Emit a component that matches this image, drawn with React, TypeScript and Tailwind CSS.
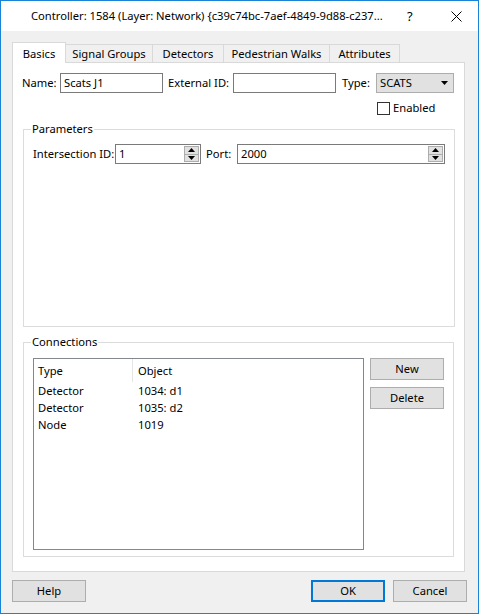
import React from "react";

const font = { fontFamily: '"Noto Sans", "Open Sans", sans-serif' };

function Btn({ label, cls }: { label: string; cls: string }) {
  return (
    <div className={"flex h-[22px] w-[74px] items-center justify-center bg-[#e1e1e1] text-black " + cls}>
      {label}
    </div>
  );
}

function SpinBox() {
  return (
    <div className="mr-[1px] flex h-[16px] w-[15px] flex-col border border-[#adadad] bg-[#e1e1e1]">
      <div className="flex flex-1 items-center justify-center border-b border-[#adadad]">
        <svg width="7" height="4" viewBox="0 0 7 4"><path d="M3.5 0 L7 4 L0 4 Z" fill="#000" /></svg>
      </div>
      <div className="flex flex-1 items-center justify-center">
        <svg width="7" height="4" viewBox="0 0 7 4"><path d="M0 0 L7 0 L3.5 4 Z" fill="#000" /></svg>
      </div>
    </div>
  );
}

export default function App() {
  return (
    <div
      className="flex h-[614px] w-[479px] flex-col whitespace-nowrap border border-[#1883d7] bg-[#f0f0f0] text-[11.2px] leading-[16px] text-black"
      style={font}
    >
      {/* title bar */}
      <div className="flex h-[30px] items-center bg-white">
        <div className="w-[378px] flex-none pl-[30px] text-[11.2px]">
          Controller: 1584 (Layer: Network) {"{"}c39c74bc-7aef-4849-9d88-c237...
        </div>
        <span className="ml-[28px] text-[13px]">?</span>
        <svg width="11" height="11" viewBox="0 0 11 11" className="ml-[38px]">
          <path d="M0.5 0.5 L10.5 10.5 M10.5 0.5 L0.5 10.5" stroke="#000" strokeWidth="1" />
        </svg>
      </div>

      {/* tabs */}
      <div className="ml-[11px] mt-[11px] flex h-[20px] items-end">
        <div className="relative z-10 -mb-px flex h-[21px] w-[54px] items-center justify-center border border-b-0 border-[#d9d9d9] bg-white pt-[1px]">
          Basics
        </div>
        <div className="flex h-[18px] w-[87px] items-center justify-center border-t border-r border-[#d9d9d9] bg-[#f0f0f0] pt-[1px]">
          Signal Groups
        </div>
        <div className="flex h-[18px] w-[71px] items-center justify-center border-t border-r border-[#d9d9d9] bg-[#f0f0f0] pt-[1px]">
          Detectors
        </div>
        <div className="flex h-[18px] w-[106px] items-center justify-center border-t border-r border-[#d9d9d9] bg-[#f0f0f0] pt-[1px]">
          Pedestrian Walks
        </div>
        <div className="flex h-[18px] w-[70px] items-center justify-center border-t border-r border-[#d9d9d9] bg-[#f0f0f0] pt-[1px]">
          Attributes
        </div>
      </div>

      {/* panel */}
      <div className="ml-[11px] flex h-[510px] w-[453px] flex-col border border-[#d9d9d9] bg-white">
        {/* row 1 */}
        <div className="mt-[10px] flex h-[20px] items-center">
          <span className="ml-[9px] w-[38px]">Name:</span>
          <div className="flex h-[20px] w-[103px] items-center border border-[#7a7a7a] bg-white pl-[3px]">Scats J1</div>
          <span className="ml-[5px] w-[65px]">External ID:</span>
          <div className="h-[20px] w-[103px] border border-[#7a7a7a] bg-white" />
          <span className="ml-[6px] w-[34px]">Type:</span>
          <div className="flex h-[20px] w-[78px] items-center border border-[#adadad] bg-[#e1e1e1] pl-[3px] pr-[5px]">
            <span>SCATS</span>
            <svg width="7" height="4" viewBox="0 0 7 4" className="ml-auto"><path d="M0 0 L7 0 L3.5 4 Z" fill="#000" /></svg>
          </div>
        </div>
        {/* row 2 */}
        <div className="mt-[8px] flex h-[14px] items-center">
          <div className="ml-[364px] h-[13px] w-[13px] border border-[#333] bg-white" />
          <span className="ml-[3px]">Enabled</span>
        </div>

        {/* Parameters */}
        <fieldset className="ml-[10px] mt-[6px] h-[206px] w-[431px] border border-[#dcdcdc] px-[9px]">
          <legend className="ml-[-2px] px-[1px] leading-[16px]">Parameters</legend>
          <div className="mt-[7px] flex h-[20px] items-center">
            <span className="w-[82px]">Intersection ID:</span>
            <div className="flex h-[20px] w-[86px] items-center border border-[#7a7a7a] bg-white">
              <span className="flex-1 pl-[3px]">1</span>
              <SpinBox />
            </div>
            <span className="ml-[5px] w-[31px]">Port:</span>
            <div className="flex h-[20px] w-[208px] items-center border border-[#7a7a7a] bg-white">
              <span className="flex-1 pl-[3px]">2000</span>
              <SpinBox />
            </div>
          </div>
        </fieldset>

        {/* Connections */}
        <fieldset className="ml-[10px] mt-[7px] h-[223px] w-[431px] border border-[#dcdcdc] px-[9px]">
          <legend className="ml-[-2px] px-[1px] leading-[16px]">Connections</legend>
          <div className="mt-[8px] flex">
            <div className="flex h-[192px] w-[331px] flex-col border border-[#828790] bg-white">
              <div className="flex h-[23px] items-center">
                <span className="w-[99px] border-r border-[#e5e5e5] pl-[4px] leading-[23px]">Type</span>
                <span className="pl-[5px]">Object</span>
              </div>
              {[
                ["Detector", "1034: d1"],
                ["Detector", "1035: d2"],
                ["Node", "1019"],
              ].map(([a, b], i) => (
                <div key={i} className="flex h-[17px] items-center">
                  <span className="w-[100px] pl-[4px]">{a}</span>
                  <span className="pl-[4px]">{b}</span>
                </div>
              ))}
            </div>
            <div className="ml-[6px] flex flex-col gap-[7px]">
              <Btn label="New" cls="border border-[#adadad]" />
              <Btn label="Delete" cls="border border-[#adadad]" />
            </div>
          </div>
        </fieldset>
      </div>

      {/* bottom buttons */}
      <div className="mt-[8px] flex items-center px-[11px]">
        <Btn label="Help" cls="border border-[#adadad]" />
        <Btn label="OK" cls="ml-auto border-2 border-[#0078d7]" />
        <Btn label="Cancel" cls="ml-[8px] border border-[#adadad]" />
      </div>
    </div>
  );
}
